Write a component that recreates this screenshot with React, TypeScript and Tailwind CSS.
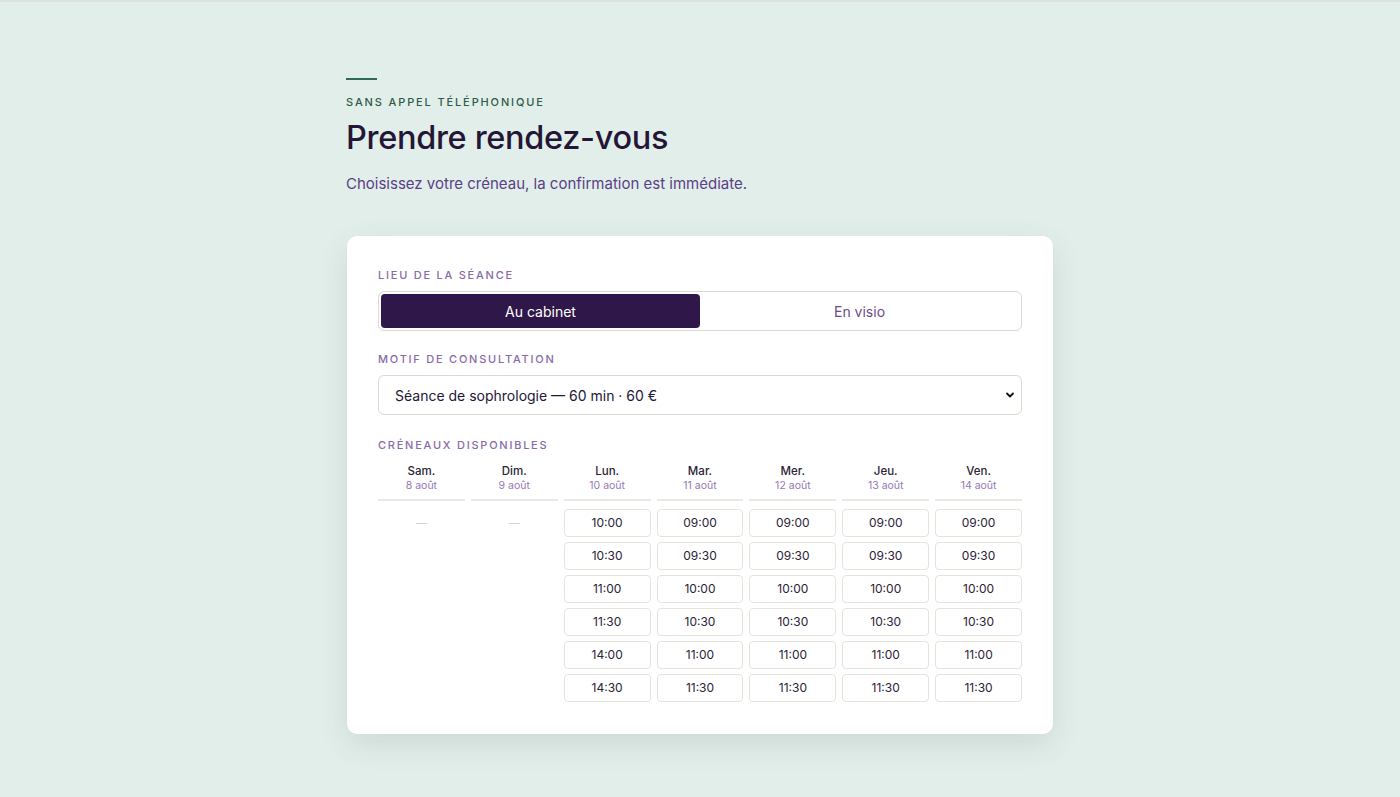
import React, { useState } from 'react';

interface Day {
  name: string;
  date: string;
  slots: string[];
}

const days: Day[] = [
  { name: 'Sam.', date: '8 août', slots: [] },
  { name: 'Dim.', date: '9 août', slots: [] },
  { name: 'Lun.', date: '10 août', slots: ['10:00', '10:30', '11:00', '11:30', '14:00', '14:30'] },
  { name: 'Mar.', date: '11 août', slots: ['09:00', '09:30', '10:00', '10:30', '11:00', '11:30'] },
  { name: 'Mer.', date: '12 août', slots: ['09:00', '09:30', '10:00', '10:30', '11:00', '11:30'] },
  { name: 'Jeu.', date: '13 août', slots: ['09:00', '09:30', '10:00', '10:30', '11:00', '11:30'] },
  { name: 'Ven.', date: '14 août', slots: ['09:00', '09:30', '10:00', '10:30', '11:00', '11:30'] },
];

const Label: React.FC<{ children: React.ReactNode }> = ({ children }) => (
  <div className="text-[11px] leading-4 font-medium uppercase tracking-[0.16em] text-[#8a6aa8] mb-2">{children}</div>
);

export default function App() {
  const [mode, setMode] = useState<'cabinet' | 'visio'>('cabinet');

  return (
    <div className="min-h-[797px] bg-[#e2eeea] border-t-2 border-[#dde2e0] font-['Inter','Noto_Sans',sans-serif]">
      <div className="w-[708px] mx-auto pt-[76px]">
        <div className="w-[31px] h-[2px] bg-[#2f6a52]" />
        <div className="mt-[14px] text-[11px] leading-4 font-medium uppercase tracking-[0.17em] text-[#2f5a48]">
          Sans appel téléphonique
        </div>
        <h1 className="mt-[8px] text-[32.5px] leading-[40px] font-medium tracking-[-0.01em] text-[#231636]">Prendre rendez-vous</h1>
        <p className="mt-[16px] text-[15px] leading-5 text-[#5a3f86]">
          Choisissez votre créneau, la confirmation est immédiate.
        </p>

        <div className="mt-[42px] ml-[1px] w-[706px] bg-white rounded-[10px] shadow-[0_10px_30px_rgba(40,70,60,0.12)] pl-[31px] pr-[31px] pt-[31px] pb-[32px]">
          <Label>Lieu de la séance</Label>
          <div className="flex h-10 border border-[#ddd8d0] rounded-[6px] p-[2px]">
            <button
              onClick={() => setMode('cabinet')}
              className={`flex-1 rounded-[4px] text-[14px] ${mode === 'cabinet' ? 'bg-[#30174a] text-white' : 'text-[#6b4a8a]'}`}
            >
              Au cabinet
            </button>
            <button
              onClick={() => setMode('visio')}
              className={`flex-1 rounded-[4px] text-[14px] ${mode === 'visio' ? 'bg-[#30174a] text-white' : 'text-[#6b4a8a]'}`}
            >
              En visio
            </button>
          </div>

          <div className="mt-[20px]">
            <Label>Motif de consultation</Label>
            <div className="relative">
              <select className="w-full h-10 appearance-none border border-[#ddd8d0] rounded-[6px] pl-4 pr-10 text-[14px] text-[#231636] bg-white outline-none">
                <option>Séance de sophrologie — 60 min · 60 €</option>
              </select>
              <svg className="absolute right-[7px] top-1/2 -translate-y-1/2 pointer-events-none" width="10" height="10" viewBox="0 0 10 10">
                <path d="M2 3.5 L5 6.5 L8 3.5" fill="none" stroke="#111" strokeWidth="1.8" strokeLinecap="round" strokeLinejoin="round" />
              </svg>
            </div>
          </div>

          <div className="mt-[22px]">
            <Label>Créneaux disponibles</Label>
            <div className="grid grid-cols-7 gap-[6px] pt-[2px]">
              {days.map((d) => (
                <div key={d.name} className="flex flex-col">
                  <div className="text-center border-b-2 border-[#ece8e3] pb-[6px]">
                    <div className="text-[11.5px] leading-4 font-medium text-[#2a2236]">{d.name}</div>
                    <div className="text-[10.5px] leading-[14px] text-[#9579b3]">{d.date}</div>
                  </div>
                  <div className="flex flex-col gap-[5px] mt-[8px]">
                    {d.slots.length === 0 ? (
                      <div className="h-7 flex items-center justify-center text-[11px] text-[#d6d2cc]">—</div>
                    ) : (
                      d.slots.map((s) => (
                        <button
                          key={s}
                          className="h-7 border border-[#e6e2dc] rounded-[4px] text-[12px] text-[#2a2236] bg-white"
                        >
                          {s}
                        </button>
                      ))
                    )}
                  </div>
                </div>
              ))}
            </div>
          </div>
        </div>
      </div>
    </div>
  );
}
